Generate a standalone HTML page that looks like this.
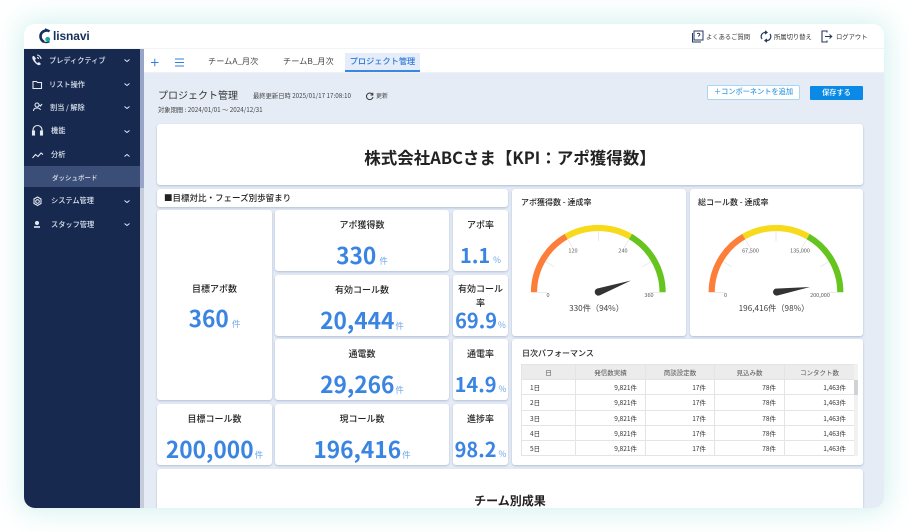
<!DOCTYPE html>
<html lang="ja"><head><meta charset="utf-8"><style>
html,body{margin:0;padding:0;width:909px;height:532px;overflow:hidden;background:#fff}
*{box-sizing:border-box}
body{font-family:"Noto Sans CJK JP","Liberation Sans",sans-serif;color:#222;position:relative}
#f{position:absolute;left:24px;top:24px;width:860px;height:484px;border-radius:11px;background:#e6ecf6;box-shadow:0 0 26px 4px rgba(120,215,205,.33)}
#c{position:absolute;left:0;top:0;width:909px;height:532px;overflow:hidden;clip-path:inset(24px 25px 24px 24px round 11px)}
.a{position:absolute;white-space:nowrap}
.s{color:#dfe5f0;font-size:7.2px;line-height:12px;font-weight:500}
.card{position:absolute;background:#fff;border-radius:3px;box-shadow:0 1px 2px rgba(110,130,170,.45)}
.t{position:absolute;left:0;right:0;text-align:center;top:8px;font-size:9px;line-height:13.500px;font-weight:500;color:#222}
.v{position:absolute;left:0;right:0;text-align:center;bottom:-4.500px;line-height:30px;font-size:22.7px;font-weight:700;color:#3a84e2;white-space:nowrap}
.v small{font-size:8.5px;font-weight:400;color:#6ea6ea;margin-left:3px}
.n{font-size:20px;bottom:-4px}
td,th{border:1px solid #e4e4e4;font-size:6.5px;font-weight:400;height:15.2px;padding:0 8px;color:#333;line-height:10px}
th{background:#ececec;text-align:center;color:#555}
td{text-align:right}td:first-child{text-align:left}
table{border-collapse:collapse;table-layout:fixed;position:absolute;left:9px;top:25px;width:333px}
</style></head><body>
<div id="f"></div>
<div id="c">
<!-- header -->
<div class="a" style="left:24px;top:24px;width:860px;height:25px;background:#fff;border-bottom:1px solid #f3f4f7"></div>
<svg class="a" style="left:36px;top:27px" width="20" height="18" viewBox="0 0 20 18"><path d="M13.500 4.500C12 3 8 3 5.500 6 3.500 9 4.500 13 8 15" fill="none" stroke="#14305f" stroke-width="2.600"/><path d="M8 15c2 1 4 .5 5.500-.5" fill="none" stroke="#14305f" stroke-width="1.400"/><path d="M9 1.800l2.500 1" stroke="#14305f" stroke-width="1.200" fill="none"/><circle cx="11.700" cy="12.300" r="2.400" fill="#19a9a5"/></svg>
<div class="a" style="left:53px;top:27px;font-size:12px;line-height:18px;font-weight:700;color:#14305f;letter-spacing:-.1px;font-family:'Liberation Sans',sans-serif">lisnavi</div>
<svg class="a" style="left:691px;top:30px" width="13" height="13" viewBox="0 0 13 13" fill="none" stroke="#27375f" stroke-width="1"><rect x="3" y="1" width="9" height="9"/><path d="M1.500 3v9h8.500"/><path d="M6.300 4c.5-1 2.500-1 2.500.5 0 1-1.300 1-1.300 2"/></svg>
<div class="a" style="left:706px;top:31px;font-size:6.300px;line-height:11px;color:#333">よくあるご質問</div>
<svg class="a" style="left:760px;top:30px" width="12" height="13" viewBox="0 0 12 13" fill="none" stroke="#27375f" stroke-width="1.200"><path d="M2 9C0 6 2 2 6 2.500M10 4c2 3 0 7-4 6.500"/><path d="M5 .8l2 1.700-2 1.500M7 12.200l-2-1.700 2-1.500"/></svg>
<div class="a" style="left:774px;top:31px;font-size:6.300px;line-height:11px;color:#333">所属切り替え</div>
<svg class="a" style="left:821px;top:30px" width="12" height="13" viewBox="0 0 12 13" fill="none" stroke="#27375f" stroke-width="1.100"><path d="M6 2.500V1H1v11h5v-1.500"/><path d="M4 6.500h6.500M8.500 4.500l2.200 2-2.200 2"/></svg>
<div class="a" style="left:836px;top:31px;font-size:6.300px;line-height:11px;color:#333">ログアウト</div>
<!-- sidebar -->
<div class="a" style="left:24px;top:49px;width:116px;height:459px;background:#17294f"></div>
<div class="a" style="left:140px;top:49px;width:4px;height:459px;background:#c6ccda"></div>
<div class="a" style="left:140px;top:49px;width:4px;height:139px;background:#98a4c8"></div>
<div class="a" style="left:24px;top:166px;width:116px;height:21px;background:#3a4e77"></div>
<svg class="a" style="left:24px;top:49px" width="116" height="190" viewBox="0 0 116 190" fill="none" stroke="#e4e9f2" stroke-width="1.100">
<g transform="translate(0 1)"><path d="M9 6c-1 1-1 2 0 4s3 4 5 5c1 .5 2 0 3-1l-2-2-1.500 1c-1-.5-2-2-2.500-3l1-1.500L10 6z" fill="#e4e9f2" stroke="none"/><path d="M13 5c2 0 4 2 4 4M13 7.500c1 0 1.500.7 1.500 1.500"/></g>
<path d="M9 32.500h3.500l1 1H17.500v6H9z"/>
<g transform="translate(0 2)"><circle cx="13" cy="54" r="2"/><path d="M9.500 60c0-2 1.500-3 3.500-3s3 .5 3.500 2M15.500 54l1 1 1.500-2"/></g>
<g transform="translate(0 1)"><path d="M9 82v-2a4.500 4.500 0 0 1 9 0v2"/><rect x="8.500" y="81" width="2" height="4" fill="#e4e9f2"/><rect x="16.500" y="81" width="2" height="4" fill="#e4e9f2"/></g>
<path d="M8.500 109l3-3.500 2.500 2 3-3.500 2 1.500"/>
<g transform="translate(0 1)"><circle cx="13.500" cy="151.500" r="1.800"/><path d="M13.500 147l3.500 2v4.500l-3.500 2-3.500-2V149z"/></g>
<circle cx="13" cy="174" r="1.500" fill="#e4e9f2"/><path d="M10 178h6" stroke-width="1.600"/>
<g stroke-width="1"><path d="M100.500 10.500l2.500 2 2.500-2M100.500 34.500l2.500 2 2.500-2M100.500 57.500l2.500 2 2.500-2M100.500 81.500l2.500 2 2.500-2M100.500 107.500l2.500-2 2.500 2M100.500 151.500l2.500 2 2.500-2M100.500 174.500l2.500 2 2.500-2"/></g>
</svg>
<div class="a s" style="left:49px;top:55px">プレディクティブ</div>
<div class="a s" style="left:49px;top:79px">リスト操作</div>
<div class="a s" style="left:50px;top:102px">割当 / 解除</div>
<div class="a s" style="left:51px;top:125px">機能</div>
<div class="a s" style="left:51px;top:149px">分析</div>
<div class="a s" style="left:52px;top:171px;font-size:6.500px">ダッシュボード</div>
<div class="a s" style="left:51px;top:195px">システム管理</div>
<div class="a s" style="left:51px;top:219px">スタッフ管理</div>
<!-- tabs -->
<div class="a" style="left:144px;top:49px;width:740px;height:23px;background:#fff"></div>
<div class="a" style="left:144px;top:72px;width:740px;height:1px;background:#eef0f6"></div>
<svg class="a" style="left:150px;top:56px" width="36" height="13" viewBox="0 0 36 13" fill="none" stroke="#2f7fe0" stroke-width="1"><path d="M1 6.500h7.500M4.800 2.800v7.500"/><path d="M25 3h9M25 6.500h9M25 10h9"/></svg>
<div class="a" style="left:208px;top:55px;font-size:8.200px;line-height:12px;color:#444">チームA_月次</div>
<div class="a" style="left:283px;top:55px;font-size:8.200px;line-height:12px;color:#444">チームB_月次</div>
<div class="a" style="left:345px;top:53px;width:75px;height:19px;background:#e4edf9;border-bottom:2px solid #3a86e0;text-align:center;font-size:8.200px;line-height:17px;color:#2f77d8;font-weight:500">プロジェクト管理</div>
<!-- page title -->
<div class="a" style="left:158px;top:87px;font-size:10px;line-height:15px;color:#333">プロジェクト管理</div>
<div class="a" style="left:253px;top:91px;font-size:6.300px;line-height:10px;color:#444">最終更新日時 2025/01/17 17:08:10</div>
<svg class="a" style="left:365px;top:92px" width="9" height="9" viewBox="0 0 9 9" fill="none" stroke="#333" stroke-width="1"><path d="M7.500 2.500A3.300 3.300 0 1 0 8 5"/><path d="M7.800 .8v2.200H5.600"/></svg>
<div class="a" style="left:376px;top:91px;font-size:6px;line-height:10px;color:#444">更新</div>
<div class="a" style="left:158px;top:104px;font-size:6.300px;line-height:11px;color:#444">対象期間 : 2024/01/01 ～ 2024/12/31</div>
<div class="a" style="left:707px;top:85px;width:93px;height:15px;background:#fff;border:1px solid #a9d6f3;border-radius:2px;text-align:center;font-size:7.200px;line-height:13px;color:#3a9be0;font-weight:500">＋コンポーネントを追加</div>
<div class="a" style="left:810px;top:86px;width:53px;height:14px;background:#0a8ae6;border-radius:1px;text-align:center;font-size:7.200px;line-height:14px;color:#fff;font-weight:500">保存する</div>
<!-- title card -->
<div class="card" style="left:157px;top:124px;width:706px;height:61px"><div style="text-align:center;font-size:16.500px;font-weight:700;line-height:24px;padding-top:21px;color:#222">株式会社ABCさま【KPI：アポ獲得数】</div></div>
<div class="card" style="left:157px;top:189px;width:351px;height:18px"><div style="font-size:8.500px;line-height:18px;padding-left:7px;color:#222;font-weight:500">■目標対比・フェーズ別歩留まり</div></div>
<!-- KPI -->
<div class="card" style="left:157px;top:210px;width:115px;height:190px"><div class="t" style="top:72px">目標アポ数</div><div class="v" style="bottom:61px">360<small>件</small></div></div>
<div class="card" style="left:275px;top:210px;width:174px;height:61px"><div class="t">アポ獲得数</div><div class="v">330<small>件</small></div></div>
<div class="card" style="left:453px;top:210px;width:55px;height:61px"><div class="t">アポ率</div><div class="v n">1.1<small>%</small></div></div>
<div class="card" style="left:275px;top:275px;width:174px;height:61px"><div class="t">有効コール数</div><div class="v">20,444<small style="margin-left:1px">件</small></div></div>
<div class="card" style="left:453px;top:275px;width:55px;height:61px"><div class="t" style="top:7px;padding:0 4px">有効コール率</div><div class="v n">69.9<small style="margin-left:1px">%</small></div></div>
<div class="card" style="left:275px;top:339px;width:174px;height:61px"><div class="t">通電数</div><div class="v">29,266<small style="margin-left:1px">件</small></div></div>
<div class="card" style="left:453px;top:339px;width:55px;height:61px"><div class="t">通電率</div><div class="v n">14.9<small style="margin-left:2px">%</small></div></div>
<div class="card" style="left:157px;top:404px;width:115px;height:61px"><div class="t">目標コール数</div><div class="v">200,000<small style="margin-left:1px">件</small></div></div>
<div class="card" style="left:275px;top:404px;width:174px;height:61px"><div class="t">現コール数</div><div class="v">196,416<small style="margin-left:1px">件</small></div></div>
<div class="card" style="left:453px;top:404px;width:55px;height:61px"><div class="t">進捗率</div><div class="v n">98.2<small style="margin-left:2px">%</small></div></div>
<!-- gauges -->
<div class="card" style="left:512px;top:189px;width:174px;height:147px"></div>
<div class="card" style="left:690px;top:189px;width:173px;height:147px"></div>
<div class="a" style="left:521px;top:196px;font-size:8px;line-height:13px;font-weight:500">アポ獲得数 - 達成率</div>
<div class="a" style="left:698px;top:196px;font-size:8px;line-height:13px;font-weight:500">総コール数 - 達成率</div>
<svg class="a" style="left:512px;top:189px" width="352" height="147" viewBox="512 189 352 147" font-family="'Noto Sans CJK JP',sans-serif">
<defs><g id="g" fill="none" stroke-width="6.200">
<path d="M-64.300 0A64.300 64.300 0 0 1-32.150-55.700" stroke="#fd7e39"/>
<path d="M-32.150-55.700A64.300 64.300 0 0 1 32.150-55.700" stroke="#f8da1c"/>
<path d="M32.150-55.700A64.300 64.300 0 0 1 64.300 0" stroke="#66c41e"/>
<g stroke="#ddd" stroke-width=".6"><path d="M-61 0h10M61 0h-10M0-61v10M-30.500-52.800l5 8.600M30.500-52.800l-5 8.600M-52.800-30.500l8.600 5M52.800-30.500l-8.600 5"/></g>
</g></defs>
<use href="#g" x="598.300" y="292.300"/><use href="#g" x="776" y="292.300"/>
<g fill="#555" font-size="5.500" text-anchor="middle"><text x="548" y="297">0</text><text x="573" y="252.500">120</text><text x="623" y="252.500">240</text><text x="649" y="297">360</text>
<text x="725.500" y="297">0</text><text x="750.500" y="252.500">67,500</text><text x="800" y="252.500">135,000</text><text x="820" y="297">200,000</text></g>
<path d="M631 280.500L600 295.300a3.600 3.600 0 0 1-3.200-6.700z" fill="#333"/>
<path d="M810 287L777 295.600a3.600 3.600 0 0 1-1.500-7z" fill="#333"/>
<g fill="#444" font-size="8.200" text-anchor="middle"><text x="596.500" y="311">330件（94%）</text><text x="774" y="311">196,416件（98%）</text></g>
</svg>
<!-- table -->
<div class="card" style="left:512px;top:339px;width:351px;height:126px"><div style="position:absolute;left:10px;top:8px;font-size:8px;line-height:13px;font-weight:500">日次パフォーマンス</div>
<table><colgroup><col style="width:54px"><col style="width:70px"><col style="width:69px"><col style="width:70px"><col style="width:70px"></colgroup>
<tr><th>日</th><th>発信数実績</th><th>商談設定数</th><th>見込み数</th><th>コンタクト数</th></tr>
<tr><td>1日</td><td>9,821件</td><td>17件</td><td>78件</td><td>1,463件</td></tr>
<tr><td>2日</td><td>9,821件</td><td>17件</td><td>78件</td><td>1,463件</td></tr>
<tr><td>3日</td><td>9,821件</td><td>17件</td><td>78件</td><td>1,463件</td></tr>
<tr><td>4日</td><td>9,821件</td><td>17件</td><td>78件</td><td>1,463件</td></tr>
<tr><td>5日</td><td>9,821件</td><td>17件</td><td>78件</td><td>1,463件</td></tr>
</table>
<div style="position:absolute;left:342px;top:25px;width:3.500px;height:92px;background:#f1f1f1"></div>
<div style="position:absolute;left:342px;top:41px;width:3.500px;height:15px;background:#cfd3d8"></div>
</div>
<!-- team -->
<div class="card" style="left:157px;top:469px;width:706px;height:60px"><div style="text-align:center;font-size:12px;line-height:15px;font-weight:700;padding-top:24px;color:#222">チーム別成果</div></div>
</div>
</body></html>
